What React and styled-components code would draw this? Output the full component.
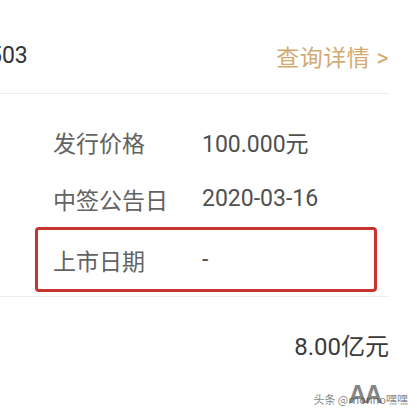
import React from "react";
import styled, { createGlobalStyle } from "styled-components";

const GlobalStyle = createGlobalStyle`
  body {
    margin: 0;
    background: #fff;
    font-family: Roboto, "Noto Sans CJK SC", sans-serif;
  }
`;

const StyledPage = styled.div`
  position: relative;
  width: 417px;
  height: 417px;
  overflow: hidden;
  padding-right: 28px;
  box-sizing: border-box;
`;

const StyledHeader = styled.div`
  display: flex;
  justify-content: space-between;
  align-items: center;
  height: 94px;
  padding-top: 18px;
  box-sizing: border-box;
  border-bottom: 1px solid #ececec;
`;

const StyledCode = styled.span`
  margin-left: -11px;
  font-size: 23px;
  color: #333;
`;

const StyledDetailLink = styled.span`
  font-size: 23px;
  color: #d2aa72;
  letter-spacing: 0.5px;
`;

const StyledInfoList = styled.div`
  display: flex;
  flex-direction: column;
  padding: 19px 12px 4px 35px;
  border-bottom: 1px solid #ececec;
`;

const StyledInfoRow = styled.div`
  display: grid;
  grid-template-columns: 149px 1fr;
  align-items: center;
  height: ${props => (props.highlight ? "65px" : "57px")};
  padding-left: 15px;
  box-sizing: border-box;
  border: 3px solid ${props => (props.highlight ? "#c9332f" : "transparent")};
  border-radius: 4px;
`;

const StyledLabel = styled.span`
  font-size: 23px;
  color: #636363;
`;

const StyledValue = styled.span`
  font-size: 23px;
  color: #505050;
`;

const StyledAmount = styled.div`
  display: flex;
  justify-content: flex-end;
  padding-top: 30px;
  font-size: 24px;
  color: #3a3a3a;
`;

const StyledWatermark = styled.div`
  position: absolute;
  right: 9px;
  bottom: 10px;
  font-size: 11px;
  color: #888;
  font-family: "Noto Sans CJK SC", sans-serif;
`;

const StyledWatermarkMark = styled.span`
  position: absolute;
  left: 35px;
  top: -11px;
  font-size: 25px;
  font-weight: 700;
  color: rgba(50, 50, 50, 0.6);
  letter-spacing: -2px;
  font-family: "Liberation Sans", sans-serif;
`;

const infoRows = [
  { label: "发行价格", value: "100.000元" },
  { label: "中签公告日", value: "2020-03-16" },
  { label: "上市日期", value: "-", highlight: true },
];

const App = () => {
  return (
    <StyledPage>
      <GlobalStyle />
      <StyledHeader>
        <StyledCode>503</StyledCode>
        <StyledDetailLink>查询详情 &gt;</StyledDetailLink>
      </StyledHeader>
      <StyledInfoList>
        {infoRows.map((row) => (
          <StyledInfoRow key={row.label} highlight={row.highlight}>
            <StyledLabel>{row.label}</StyledLabel>
            <StyledValue>{row.value}</StyledValue>
          </StyledInfoRow>
        ))}
      </StyledInfoList>
      <StyledAmount>8.00亿元</StyledAmount>
      <StyledWatermark>
        头条 @rnonno嘿嘿
        <StyledWatermarkMark>AA</StyledWatermarkMark>
      </StyledWatermark>
    </StyledPage>
  );
};

export default App;
